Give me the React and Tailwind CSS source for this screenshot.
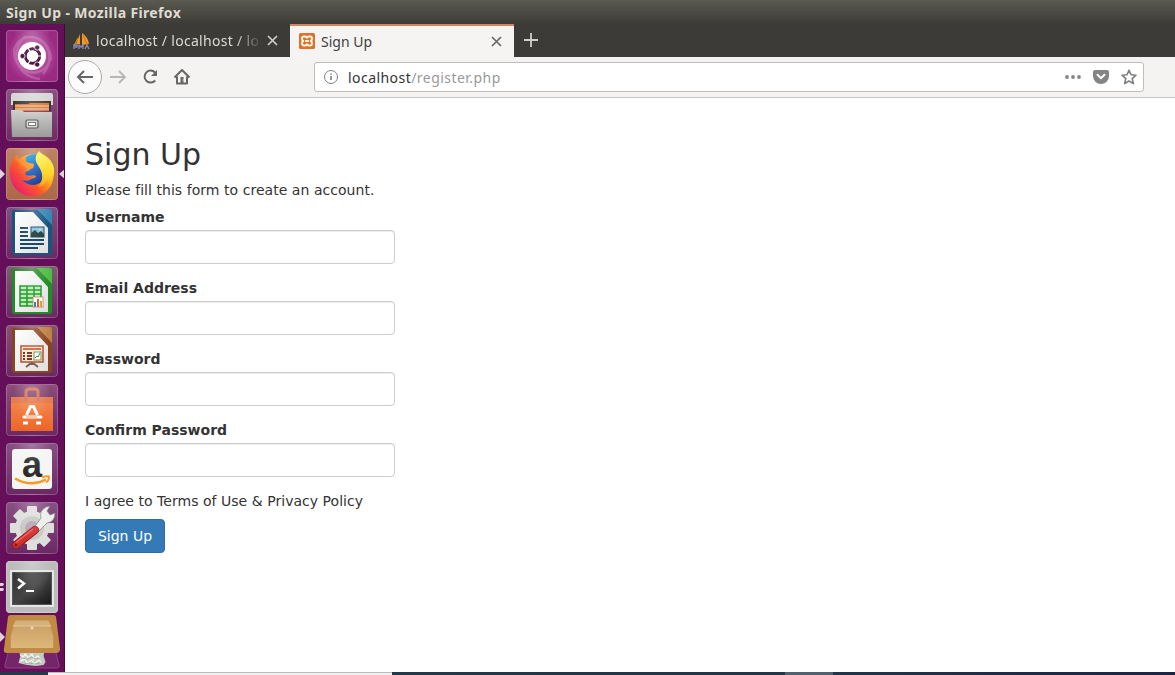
import React from "react";

const Svg = ({ children }) => (
  <svg width="52" height="52" viewBox="0 0 52 52" className="block">{children}</svg>
);

function UbuntuIcon() {
  return (
    <Svg>
      <defs>
        <radialGradient id="dash"><stop offset="0" stopColor="#d98bc8" /><stop offset=".65" stopColor="#ad4397" /><stop offset="1" stopColor="#9a2a82" /></radialGradient>
      </defs>
      <rect width="52" height="52" rx="3" fill="url(#dash)" />
      <path d="M8 20C14 -1 44 4 45 30M44 30C38 50 8 46 8 20M20 6C4 18 8 46 34 49M34 10c12 7 12 24 3 34" fill="none" stroke="#efc2e4" strokeOpacity=".25" strokeWidth="2.5" />
      <circle cx="26" cy="26" r="14" fill="#fff" />
      <circle cx="26.5" cy="26" r="7.2" fill="none" stroke="#49113f" strokeWidth="3" />
      <path d="M26.5 26l-5 9M26.5 26l-5-9M26.5 26h10" stroke="#fff" strokeWidth="1.2" />
      <circle cx="26.5" cy="26" r="5.6" fill="#fff" />
      <g fill="#49113f" stroke="#fff" strokeWidth=".8"><circle cx="16.5" cy="26" r="2.6" /><circle cx="31.2" cy="17.5" r="2.6" /><circle cx="31.2" cy="34.5" r="2.6" /></g>
    </Svg>
  );
}

function FilesIcon() {
  return (
    <Svg>
      <defs><linearGradient id="drawer" x2="0" y2="1"><stop stopColor="#cfcfcd" /><stop offset="1" stopColor="#9b9b99" /></linearGradient></defs>
      <path d="M7 4h38q2 0 2 3v9H5V7q0-3 2-3z" fill="#d5d6d5" />
      <path d="M7 12h38v10H7z" fill="#3c3834" />
      <path d="M9 15h13l2-1h19v8H9z" fill="#d9793f" />
      <path d="M9 17h34M9 20h34" stroke="#f5d9a7" strokeWidth="1.2" />
      <path d="M5 21h11l2 2h28v25H6z" fill="url(#drawer)" />
      <rect x="20" y="31" width="12" height="8" rx="1.5" fill="#ddd" stroke="#595959" strokeWidth="1.2" />
      <rect x="22.5" y="33.5" width="7" height="3" fill="#fff" stroke="#777" />
    </Svg>
  );
}

function FirefoxIcon() {
  return (
    <Svg>
      <defs>
        <linearGradient id="fox" x1=".9" y1=".1" x2=".1" y2=".8"><stop stopColor="#ffcf2e" /><stop offset=".35" stopColor="#ffad1b" /><stop offset=".62" stopColor="#ff5a27" /><stop offset="1" stopColor="#e8216b" /></linearGradient>
        <linearGradient id="globe" x2=".6" y2="1"><stop stopColor="#12b3ee" /><stop offset=".5" stopColor="#1569cc" /><stop offset="1" stopColor="#263d94" /></linearGradient>
        <linearGradient id="flame" x2="0" y2="1"><stop stopColor="#fff75e" /><stop offset=".65" stopColor="#ffd52c" /><stop offset="1" stopColor="#ff9b1e" /></linearGradient>
      </defs>
      <path d="M7 12c1-2 2-4 4-5 0 2 1 3 2 4C24 3 38 5 44 13c7 10 4 26-6 32-12 7-27 2-32-10C3 28 3 20 5 17z" fill="url(#fox)" />
      <path d="M19 10c4-4 11-5 15-2l5 11c2 9-2 17-11 18-5 0-9-2-12-5 4 1 7 1 9-1 2-1 5-1 5-3-3-2-7 1-10-1-2-2 0-4 3-4l1-3c2-1 4-2 4-4l-5-1c-3-1-4-3-4-5z" fill="url(#globe)" />
      <path d="M12 12c4-2 7-1 9-2-3 4-1 6 2 7l5 1c0 2-3 3-5 4" fill="#ff8f20" />
      <path d="M33 3c-5 6-4 10 0 16 4 6 5 13-1 20 6-1 9-5 10-8 1 2 0 4-1 6 11-9 8-22 0-28-4-3-7-4-8-6z" fill="url(#flame)" />
    </Svg>
  );
}

function Sheet({ dark, light, id, children }) {
  return (
    <Svg>
      <defs><linearGradient id={id} x2="1" y2="1"><stop stopColor="#fff" /><stop offset="1" stopColor="#dedede" /></linearGradient></defs>
      <path d="M8 3h33l5 5v37q0 3-3 3H9q-3 0-3-3V5q0-2 2-2z" fill={dark} />
      <path d="M31 2h13q2 0 2 3v13z" fill={light} />
      <path d="M9 5h18l15 16v25H9z" fill={`url(#${id})`} />
      {children}
    </Svg>
  );
}

const Writer = () => (
  <Sheet dark="#17547f" light="#3786b5" id="writer">
    <path d="M14 21h8M14 25h8M14 29h8M14 33h24M14 37h24M14 41h18" stroke="#174968" strokeWidth="2" />
    <rect x="25" y="20" width="13" height="10" fill="#81c5e8" stroke="#174968" />
    <path d="M25 30v-4l4-3 3 3 3-2 3 3v3z" fill="#263e3c" /><circle cx="34" cy="22.5" r="1" fill="#ffe46a" />
  </Sheet>
);
const Calc = () => (
  <Sheet dark="#218b24" light="#4dbd43" id="calc">
    <path d="M14 20h21v20H14z" fill="#bdecb5" />
    <path d="M14 20h21v20H14zM14 24h21M14 28h21M14 32h21M14 36h21M21 20v20M28 20v20" stroke="#21962b" strokeWidth="1.5" fill="none" />
    <rect x="27" y="31" width="10" height="10" fill="#fff" stroke="#c98360" strokeWidth=".8" />
    <path d="M28 36h2v5h-2z" fill="#2b92b9" /><path d="M31 33h2v8h-2z" fill="#e65c2c" /><path d="M34 35h2v6h-2z" fill="#e3a22b" />
  </Sheet>
);
const Impress = () => (
  <Sheet dark="#8a4421" light="#c08145" id="impress">
    <rect x="15" y="21" width="22" height="16" fill="#ffe8d7" stroke="#b84c24" strokeWidth="1.5" />
    <path d="M17 24h18" stroke="#cb6b42" strokeWidth="2" /><path d="M17 28h2M17 31h2M17 34h2M21 28h5M21 31h5M21 34h5" stroke="#7c3017" strokeWidth="2" />
    <rect x="28" y="27" width="7" height="8" fill="#fff" stroke="#76905a" /><path d="M29 33l2-2 1 1 2-4" fill="none" stroke="#29942e" /><path d="M26 37v3M25 38l-5 4M27 38l5 4" stroke="#785f57" strokeWidth="2" />
  </Sheet>
);
const Software = () => (
  <Svg>
    <defs><linearGradient id="bag" x2="0" y2="1"><stop stopColor="#f58a4e" /><stop offset="1" stopColor="#ed6528" /></linearGradient></defs>
    <path d="M5 13h42v34H5z" fill="url(#bag)" /><path d="M5 13h42v6H5z" fill="#db7451" opacity=".6" />
    <path d="M20 17V8q0-3 3-3h6q3 0 3 3v9" fill="none" stroke="#d87352" strokeWidth="3" />
    <path d="M20.5 31l4-8.5h3l4 8.5" fill="none" stroke="#fff" strokeWidth="3" /><path d="M18 33h17" stroke="#fff" strokeWidth="3.2" strokeLinecap="round" /><path d="M20 33h11" stroke="#ee7139" strokeWidth=".8" /><path d="M17 39h5M30 39h5" stroke="#fff" strokeWidth="3" />
  </Svg>
);
const Amazon = () => (
  <Svg>
    <rect x="6" y="6" width="40" height="40" rx="3" fill="#f5f5f3" />
    <text x="26" y="33.5" textAnchor="middle" fontSize="36" fontWeight="700" fontFamily="Noto Sans CJK SC, Liberation Sans, sans-serif" className="font-['Liberation_Sans',sans-serif]" fill="#232323">a</text>
    <path d="M9 35.5q16 9 31 1" fill="none" stroke="#f69b20" strokeWidth="2.5" /><path d="M36 34.5q4-2 7-1 0 4-3 6" fill="none" stroke="#f69b20" strokeWidth="2" />
  </Svg>
);
const Settings = () => (
  <Svg>
    <g fill="#dededc" transform="translate(26 26)">
      {[0, 45, 90, 135].map((a) => <rect key={a} x="-5" y="-22" width="10" height="44" rx="1" transform={`rotate(${a})`} />)}
      <circle r="17" /><circle r="12" fill="#c8c8c6" /><circle r="7" fill="#b6a3b2" />
    </g>
    <path d="M27 27l8-11q-2-7 5-11l4-1-3 5 3 4 5-2q0 9-8 10l-10 10z" fill="#eeeeed" stroke="#858585" strokeWidth=".8" />
    <path d="M29 28L10 43" stroke="#8f1517" strokeWidth="8" strokeLinecap="round" /><path d="M29 28L10 43" stroke="#d42f2f" strokeWidth="6.5" strokeLinecap="round" /><path d="M27 27L10 40.5" stroke="#ed6862" strokeWidth="1.5" /><circle cx="10" cy="43" r="1.5" fill="#742025" />
  </Svg>
);
const Terminal = () => (
  <Svg>
    <defs><linearGradient id="term" x2="1" y2="1"><stop stopColor="#333" /><stop offset=".5" stopColor="#444" /><stop offset="1" stopColor="#171717" /></linearGradient></defs>
    <rect width="52" height="52" rx="4" fill="#bcbcbc" /><rect x="4" y="9" width="44" height="37" rx="1" fill="#e6e6e5" /><rect x="6.5" y="11.5" width="39" height="32" fill="url(#term)" stroke="#555" />
    <path d="M12 18l6 4.5-6 5" fill="none" stroke="#fff" strokeWidth="2.5" /><path d="M20 30h8" stroke="#fff" strokeWidth="2" />
  </Svg>
);

const apps = [
  [UbuntuIcon, "bg-[#a63c90]"],
  [FilesIcon, "bg-[linear-gradient(#8a5280,#6f2c63)]"],
  [FirefoxIcon, "bg-[linear-gradient(#bd8265,#ac6748)]"],
  [Writer, "bg-[linear-gradient(#7b527f,#6b2864)]"],
  [Calc, "bg-[linear-gradient(#78606d,#6b2864)]"],
  [Impress, "bg-[linear-gradient(#88526d,#6b2864)]"],
  [Software, "bg-[linear-gradient(#8b4d79,#6b2864)]"],
  [Amazon, "bg-[linear-gradient(#875083,#6b2864)]"],
  [Settings, "bg-[linear-gradient(#875083,#6b2864)]"],
  [Terminal, "bg-[#bcbcbc]"],
];

function Launcher() {
  return (
    <aside className="relative flex h-[648px] w-[65px] shrink-0 flex-col gap-[7px] overflow-hidden border-r border-[#40083c] bg-[#650e59] pt-1.5 pl-1.5">
      {apps.map(([Icon, bg], i) => (
        <div key={i} className={`relative h-[52px] w-[52px] shrink-0 overflow-hidden rounded ${bg}`}>
          <Icon />
          <div className="pointer-events-none absolute inset-0 rounded border border-white/20 bg-[radial-gradient(ellipse_at_50%_-5%,rgba(255,255,255,0.25),transparent_55%)]" />
        </div>
      ))}
      <svg className="-mt-[5px] -ml-[3px] block shrink-0" width="58" height="55" viewBox="0 0 60 55" preserveAspectRatio="none">
        <defs><linearGradient id="tray" x2="0" y2="1"><stop stopColor="#c79c64" /><stop offset="1" stopColor="#dbb879" /></linearGradient></defs>
        <path d="M6 35h48l4 15q1 3-3 3H4q-3 0-2-3z" fill="#77256a" stroke="#8a4681" />
        <path d="M16 35h27l-1 6 2 6-2 3-8 1-9-1-9-2 2-7z" fill="#c5cbc2" />
        <path d="M18 40l3 2 2-3 3 4 4-4 2 5 4-3 3 3M18 46l5-2 2 4 5-3 2 4 5-4 3 3" fill="none" stroke="#f2f3eb" strokeWidth="1.5" />
        <path d="M20 43l5 1 4-2 5 2 5-1M22 49l6-1 5 1 6-1" fill="none" stroke="#9ba594" strokeWidth=".8" />
        <path d="M8 0h44q3 0 3 3l4 31q0 4-4 4H4q-4 0-3-4L5 3q0-3 3-3z" fill="#c18a43" />
        <path d="M13 5h34l5 16v12H8V21z" fill="url(#tray)" /><path d="M13 6h34l3 5H10z" fill="#d4b17b" /><path d="M10 11h40" stroke="#e3c99b" /><circle cx="30" cy="13" r="1.8" fill="#e9cfaa" />
      </svg>
      <svg className="absolute inset-0" width="65" height="648" viewBox="0 0 65 648">
        <g fill="#ddd3dc"><path d="M0 145l5 5-5 5zM65 145l-6 5 6 5zM0 608l5 5-5 5zM0 559h3l1 1-1 2H0zM0 564h3l1 1-1 2H0z" /></g>
      </svg>
    </aside>
  );
}

const Close = ({ color }) => (
  <svg width="11" height="11" viewBox="0 0 11 11" className="shrink-0"><path d="M1 1l9 9M10 1l-9 9" stroke={color} strokeWidth="1.7" /></svg>
);

function Browser() {
  return (
    <header className="font-['Noto_Sans','Open_Sans',sans-serif]">
      <div className="flex h-[33px] bg-[#3c3b37]">
        <div className="flex w-[225px] items-center pl-2 text-[14px] text-[#dcdad5]">
          <svg width="18" height="18" viewBox="0 0 18 18" className="mr-[5px] shrink-0">
            <path d="M7 2L3 12h4zM9 1v12l7-1q-1-7-7-11z" fill="#f49a24" /><path d="M5 6L1 14M10 3l4 9" stroke="#d77b25" strokeWidth="1.3" /><path d="M1 17v-4h3v2H2M6 17v-4l2 2 2-2v4M12 17l2-4 2 4" fill="none" stroke="#8a8db6" strokeWidth="1.3" />
          </svg>
          <span className="w-[165px] whitespace-nowrap tracking-[0.3px] [mask-image:linear-gradient(90deg,#000_140px,transparent_166px)]">localhost / localhost / lo</span>
          <span className="ml-[6px]"><Close color="#d1cfcb" /></span>
        </div>
        <div className="flex w-[224px] items-center border-t-2 border-[#d98158] bg-[#f5f4f3] pr-3 pb-px pl-[9px] text-[14px] text-[#414141]">
          <svg width="16" height="16" viewBox="0 0 16 16" className="mr-1.5"><rect width="16" height="16" rx="1.5" fill="#df7129" /><path d="M5 3.5h1q2 0 2 2 0-2 2-2h1q2 0 2 2.2T11 8q2 0 2 2.3t-2 2.2h-1q-2 0-2-2 0 2-2 2H5q-2 0-2-2.2T5 8q-2 0-2-2.3t2-2.2zM6 8h4" fill="none" stroke="#fff4e8" strokeWidth="1.9" /></svg>
          <span className="flex-1">Sign Up</span><Close color="#686868" />
        </div>
        <svg width="34" height="33" viewBox="0 0 34 33"><path d="M10 16h14M17 9v14" stroke="#d1d0cb" strokeWidth="1.8" /></svg>
      </div>
      <div className="flex h-[41px] items-center border-b border-[#c7c7c6] bg-[#f4f3f2] pl-[3px]">
        <div className="flex h-[34px] w-[34px] items-center justify-center rounded-full border border-[#aaa] bg-[#fcfcfc]">
          <svg width="18" height="18" viewBox="0 0 18 18"><path d="M17 9H2M8 3L2 9l6 6" fill="none" stroke="#666" strokeWidth="2" /></svg>
        </div>
        <svg width="18" height="18" viewBox="0 0 18 18" className="ml-[7px]"><path d="M1 9h15M10 3l6 6-6 6" fill="none" stroke="#b7b7b7" strokeWidth="1.8" /></svg>
        <svg width="18" height="18" viewBox="0 0 18 18" className="ml-[14px]"><path d="M14 4.5A6 6 0 1 0 14.2 12.5" fill="none" stroke="#666" strokeWidth="2" /><path d="M16 2v6h-6z" fill="#666" /></svg>
        <svg width="18" height="18" viewBox="0 0 18 18" className="ml-[14px]"><path d="M1.5 9.5L9 2l7.5 7.5M4 8.5v7h10v-7" fill="none" stroke="#666" strokeWidth="2" strokeLinejoin="round" /><path d="M7.5 9h3v6h-3z" fill="#666" /><path d="M9.5 12h1" stroke="#eee" /></svg>
        <div className="ml-[123px] flex h-[30px] w-[830px] items-center rounded-[3px] border border-[#bdbdbb] bg-white px-2 text-[14px]">
          <svg width="16" height="16" viewBox="0 0 16 16"><circle cx="8" cy="8" r="6.5" fill="none" stroke="#7e7e7e" /><path d="M8 7v4M8 4.5v1.3" stroke="#777" strokeWidth="1.5" /></svg>
          <span className="ml-[9px] flex-1 tracking-[0.45px] text-[#999]"><span className="text-[#333]">localhost</span>/register.php</span>
          <svg width="18" height="16" viewBox="0 0 18 16"><g fill="#858585"><circle cx="3" cy="8" r="1.9" /><circle cx="9" cy="8" r="1.9" /><circle cx="15" cy="8" r="1.9" /></g></svg>
          <svg width="16" height="16" viewBox="0 0 16 16" className="ml-[11px]"><path d="M2 1h12q2 0 2 2v4a8 8 0 0 1-16 0V3q0-2 2-2z" fill="#858585" /><path d="M4.5 5.8L8 9.2l3.5-3.4" fill="none" stroke="#fff" strokeWidth="2" strokeLinecap="round" /></svg>
          <svg width="16" height="16" viewBox="0 0 16 16" className="mr-[-2px] ml-3"><path d="M8 1.2l2 4.6 5 .4-3.8 3.4 1.2 5L8 12l-4.4 2.6 1.2-5L1 6.2l5-.4z" fill="none" stroke="#7d7d7d" strokeWidth="1.6" strokeLinejoin="round" /></svg>
        </div>
      </div>
    </header>
  );
}

export default function App() {
  return (
    <div className="h-[675px] w-[1175px] overflow-hidden bg-white">
      <div className="flex h-6 items-center bg-[linear-gradient(#5b5a50,#3c3b37)] pl-1.5 font-['Noto_Sans','Open_Sans',sans-serif] text-[14px] font-bold tracking-[0.36px] text-[#dfdbd2]">Sign Up - Mozilla Firefox</div>
      <div className="flex h-[648px]">
        <Launcher />
        <div className="min-w-0 flex-1">
          <Browser />
          <main className="w-[350px] px-5 pt-10 font-['DejaVu_Sans',sans-serif] text-[14px] leading-5 text-[#333]">
            <h2 className="mb-[9px] text-[30px] leading-[33px] font-medium">Sign Up</h2>
            <p className="mb-[7px] tracking-[0.045px]">Please fill this form to create an account.</p>
            <form onSubmit={(e) => e.preventDefault()}>
              {["Username", "Email Address", "Password", "Confirm Password"].map((label, i) => (
                <div key={label} className="mb-3.5">
                  <label htmlFor={`field-${i}`} className="mb-[3px] block font-bold">{label}</label>
                  <input id={`field-${i}`} type={i > 1 ? "password" : "text"} className="block h-[34px] w-full rounded border border-[#ccc] bg-white px-3 shadow-[inset_0_1px_1px_rgba(0,0,0,0.075)]" />
                </div>
              ))}
              <p className="mb-2 tracking-[0.035px]">I agree to Terms of Use &amp; Privacy Policy</p>
              <button className="h-[34px] w-20 rounded border border-[#2e6da4] bg-[#337ab7] text-white">Sign Up</button>
            </form>
          </main>
        </div>
      </div>
      <div className="flex h-[3px] bg-[linear-gradient(90deg,#223b47,#20364a_70%,#1c2444)]">
        <div className="w-12" />
        <div className="w-[344px] border-t border-[#bbb] bg-[#f0f0f0]" />
        <div className="ml-[393px] w-12 bg-[#526170]" />
      </div>
    </div>
  );
}
